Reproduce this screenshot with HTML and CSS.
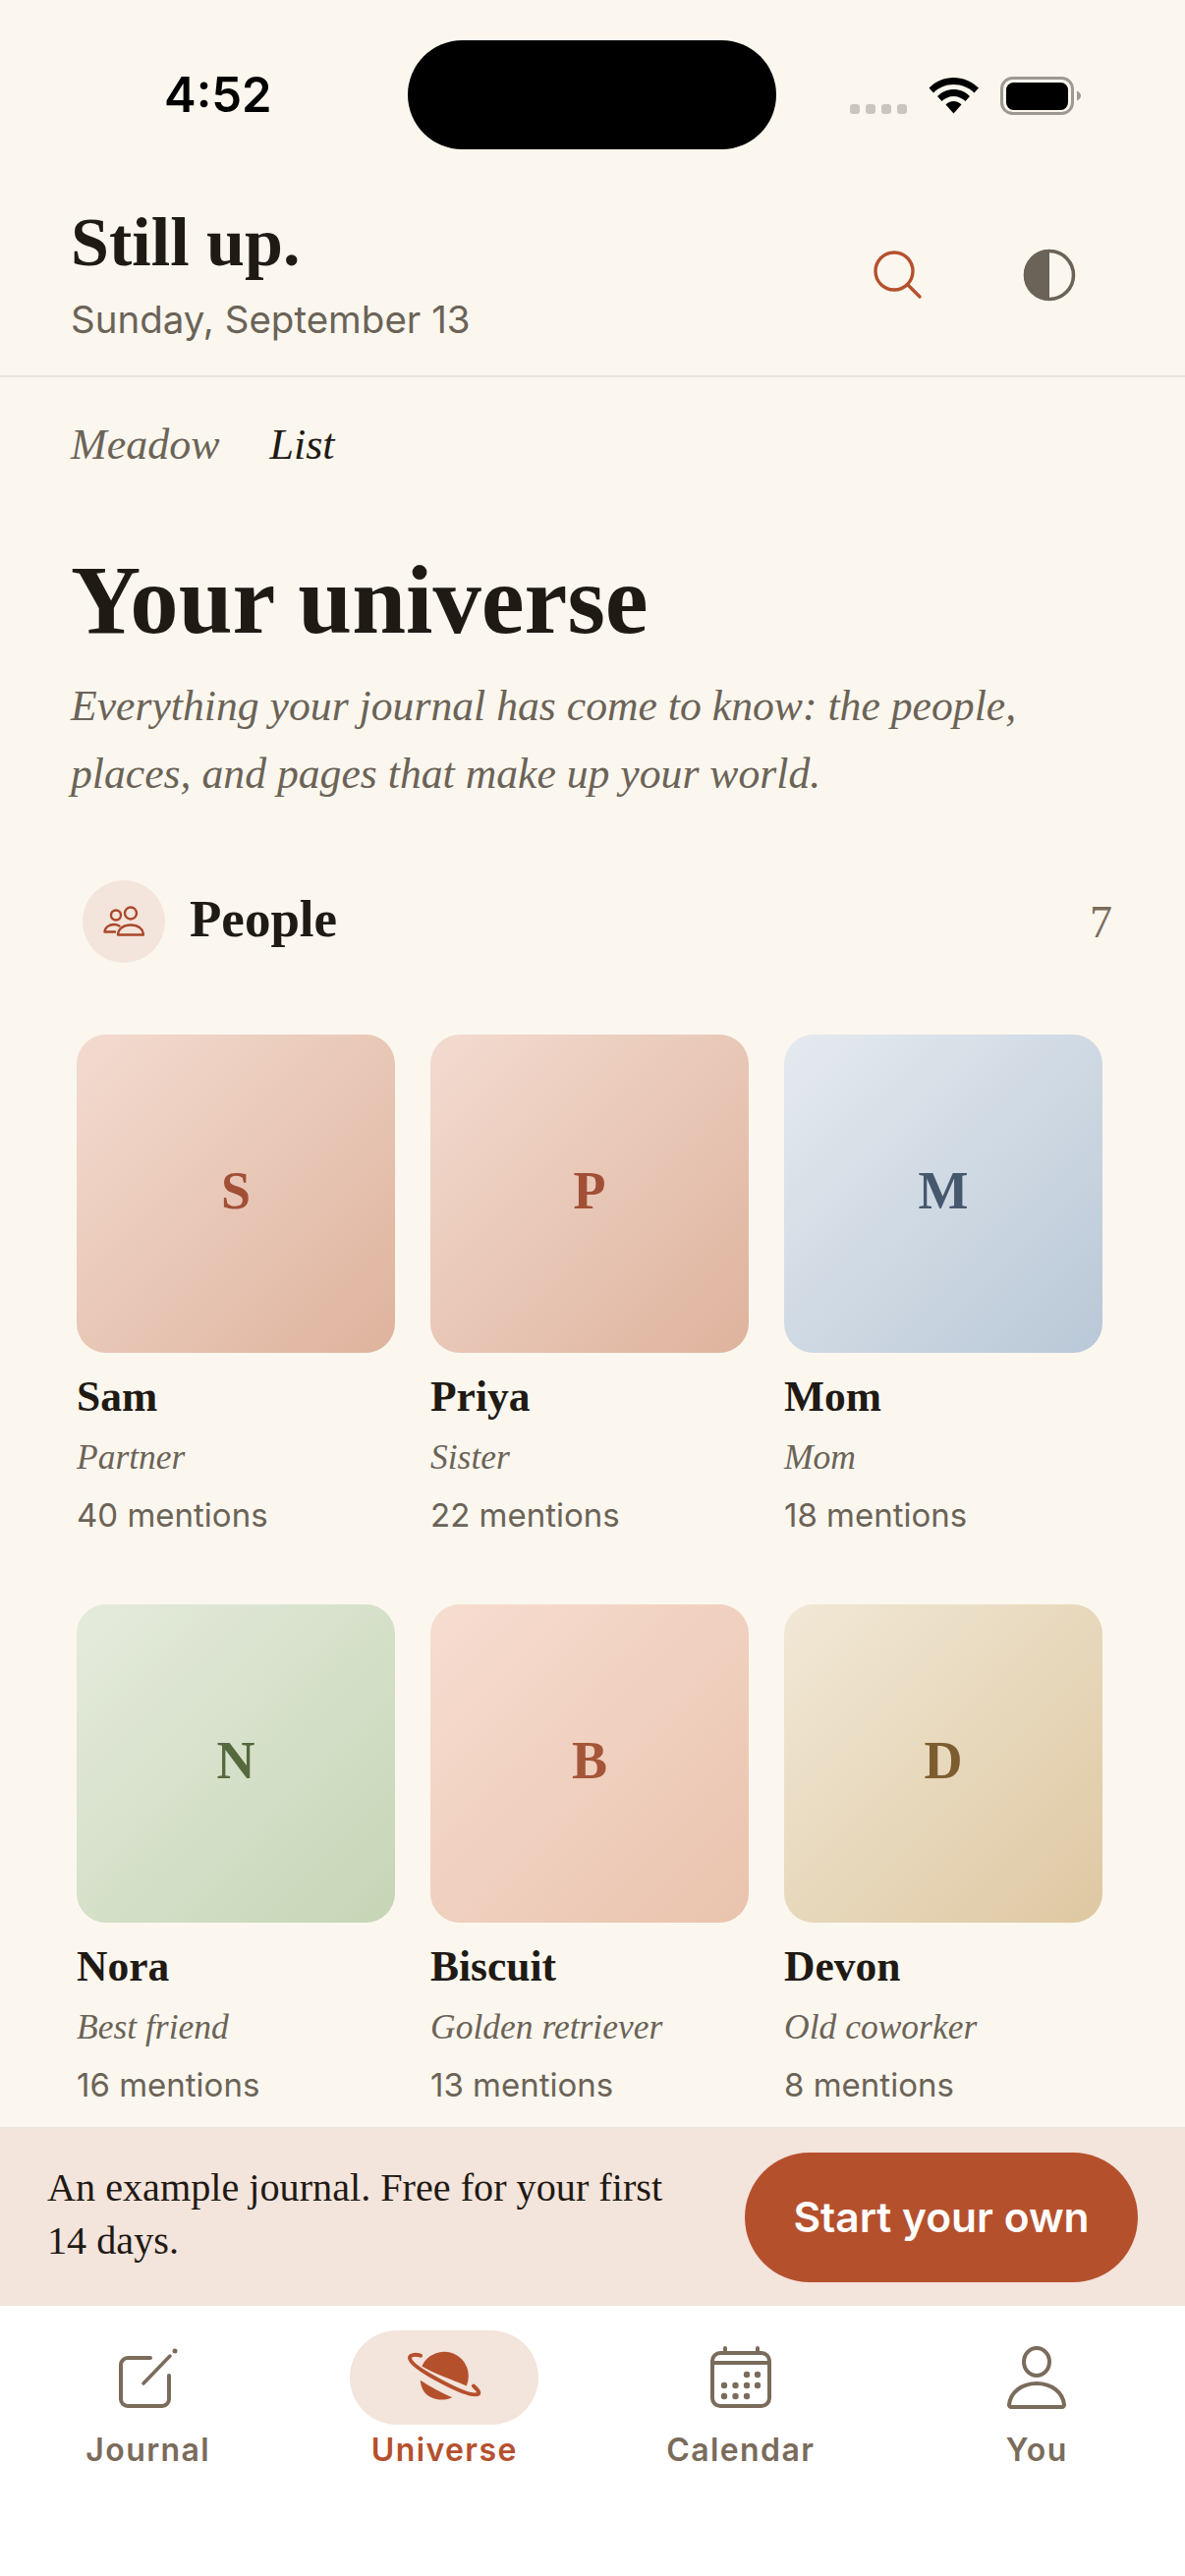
FILE: index.html
```html
<!DOCTYPE html>
<html lang="en">
<head>
    <meta charset="UTF-8">
    <meta name="viewport" content="width=device-width, initial-scale=1.0">
    <title>Your universe</title>
    <link rel="stylesheet" href="styles.css">
</head>
<body>
    <div class="phone">
        <div class="status-bar">
            <span class="time">4:52</span>
            <div class="island"></div>
            <div class="status-icons">
                <div class="signal"><i></i><i></i><i></i><i></i></div>
                <svg class="wifi" width="52" height="38" viewBox="0 0 52 38">
                    <path d="M0.500 11.500C7 5 16 1 25.500 1S44 5 51 11.500L46.500 16.500C41 11 33.500 8 25.500 8S10.500 11 5 16.500Z" fill="#000"/>
                    <path d="M9 20C13.500 15.500 19.500 13 25.500 13S38 15.500 42 20L37.500 25C34.500 22 30 20 25.500 20S16.500 22 13.500 25Z" fill="#000"/>
                    <path d="M17.500 28.500C19.500 26.500 22.500 25 25.500 25S31.500 26.500 33.500 28.500L25.500 37.500Z" fill="#000"/>
                </svg>
                <svg class="battery" width="82" height="40" viewBox="0 0 82 40">
                    <rect x="1.500" y="1.500" width="72" height="36" rx="11" fill="none" stroke="#9d9991" stroke-width="3"/>
                    <rect x="6" y="6" width="63" height="28" rx="7.500" fill="#000"/>
                    <path d="M78 14.500C80.500 15.500 82 17.500 82 19.500S80.500 23.500 78 24.500Z" fill="#9d9991"/>
                </svg>
            </div>
        </div>

        <header class="top">
            <div>
                <h1 class="greeting">Still up.</h1>
                <p class="date">Sunday, September 13</p>
            </div>
            <div class="top-actions">
                <svg width="50" height="50" viewBox="0 0 50 50" fill="none" stroke="#b5502d" stroke-width="3.400" stroke-linecap="round">
                    <circle cx="21" cy="21" r="19"/>
                    <path d="M35 35L47 47"/>
                </svg>
                <svg width="54" height="54" viewBox="0 0 54 54">
                    <circle cx="27" cy="27" r="24.500" fill="none" stroke="#6b6357" stroke-width="3.600"/>
                    <path d="M27 1A26 26 0 0 0 27 53Z" fill="#6b6357"/>
                </svg>
            </div>
        </header>

        <nav class="view-tabs">
            <span class="view-tab">Meadow</span>
            <span class="view-tab active">List</span>
        </nav>

        <main class="content">
            <h2 class="title">Your universe</h2>
            <p class="intro">Everything your journal has come to know: the people, places, and pages that make up your world.</p>

            <div class="section-head">
                <div class="section-label">
                    <div class="section-icon">
                        <svg width="42" height="32" viewBox="0 0 42 32" fill="none" stroke="#a9472a" stroke-width="2.400" stroke-linecap="round" stroke-linejoin="round">
                            <circle cx="13" cy="9.500" r="5"/>
                            <circle cx="28" cy="7.500" r="6"/>
                            <path d="M1.500 26.500C2 21.500 6.500 19 11 19C13 19 15 19.500 16.500 20.500M1.500 26.500H12"/>
                            <path d="M15 29.500C15.500 23 21 19.500 28 19.500S40.500 23 41 29.500Z"/>
                        </svg>
                    </div>
                    <h3 class="section-name">People</h3>
                </div>
                <span class="section-count">7</span>
            </div>

            <div class="people-grid">
                <div class="person">
                    <div class="avatar rose">S</div>
                    <div class="person-name">Sam</div>
                    <div class="person-role">Partner</div>
                    <div class="person-count">40 mentions</div>
                </div>
                <div class="person">
                    <div class="avatar rose">P</div>
                    <div class="person-name">Priya</div>
                    <div class="person-role">Sister</div>
                    <div class="person-count">22 mentions</div>
                </div>
                <div class="person">
                    <div class="avatar blue">M</div>
                    <div class="person-name">Mom</div>
                    <div class="person-role">Mom</div>
                    <div class="person-count">18 mentions</div>
                </div>
                <div class="person">
                    <div class="avatar green">N</div>
                    <div class="person-name">Nora</div>
                    <div class="person-role">Best friend</div>
                    <div class="person-count">16 mentions</div>
                </div>
                <div class="person">
                    <div class="avatar peach">B</div>
                    <div class="person-name">Biscuit</div>
                    <div class="person-role">Golden retriever</div>
                    <div class="person-count">13 mentions</div>
                </div>
                <div class="person">
                    <div class="avatar sand">D</div>
                    <div class="person-name">Devon</div>
                    <div class="person-role">Old coworker</div>
                    <div class="person-count">8 mentions</div>
                </div>
            </div>
        </main>

        <div class="banner">
            <p class="banner-text">An example journal. Free for your first 14 days.</p>
            <button class="banner-btn">Start your own</button>
        </div>

        <nav class="tabbar">
            <div class="tab">
                <div class="tab-icon">
                    <svg width="62" height="62" viewBox="0 0 62 62" fill="none" stroke="#7a6b5b" stroke-width="4" stroke-linecap="round" stroke-linejoin="round">
                        <path d="M33 11H10A7 7 0 0 0 3 18V53A7 7 0 0 0 10 60H45A7 7 0 0 0 52 53V29"/>
                        <path d="M26 37L53 9" stroke-width="3.500"/>
                        <circle cx="58" cy="4" r="1.500" stroke-width="2" fill="#7a6b5b"/>
                    </svg>
                </div>
                <span class="tab-label">Journal</span>
            </div>
            <div class="tab active">
                <div class="tab-icon">
                    <svg width="76" height="56" viewBox="0 0 76 56" fill="none">
                        <path d="M15.300 16.500A24.700 24.700 0 0 1 60.700 36.500C46 30 28 24 15.300 16.500Z" fill="#b5502d"/>
                        <path d="M13.700 30.700C22 36 36 44 46.300 48.300C36 53 24 50 18 43C15.500 39.500 14 35 13.700 30.700Z" fill="#b5502d"/>
                        <path d="M14 5.700C8 4 3 5 3 8C3 13 16 22 35 32C52 41 68 48 73 44.500C74.500 42 71 40 68 36.500" stroke="#b5502d" stroke-width="4" stroke-linecap="round"/>
                    </svg>
                </div>
                <span class="tab-label">Universe</span>
            </div>
            <div class="tab">
                <div class="tab-icon">
                    <svg width="64" height="64" viewBox="0 0 64 64" fill="none" stroke="#7a6b5b" stroke-width="4" stroke-linecap="round">
                        <rect x="3" y="7" width="58" height="54" rx="8"/>
                        <path d="M3 17H61M16 2V6M49 2V6"/>
                        <g fill="#7a6b5b" stroke="none">
                            <circle cx="38" cy="29" r="3.200"/><circle cx="49" cy="29" r="3.200"/>
                            <circle cx="15" cy="40" r="3.200"/><circle cx="26.500" cy="40" r="3.200"/><circle cx="38" cy="40" r="3.200"/><circle cx="49" cy="40" r="3.200"/>
                            <circle cx="15" cy="51" r="3.200"/><circle cx="26.500" cy="51" r="3.200"/><circle cx="38" cy="51" r="3.200"/>
                        </g>
                    </svg>
                </div>
                <span class="tab-label">Calendar</span>
            </div>
            <div class="tab">
                <div class="tab-icon">
                    <svg width="60" height="64" viewBox="0 0 60 64" fill="none" stroke="#7a6b5b" stroke-width="4" stroke-linejoin="round">
                        <ellipse cx="30" cy="16" rx="13" ry="14"/>
                        <path d="M2 60C3 47 15 38 30 38S57 47 58 60C58 61 57 62 56 62H4C3 62 2 61 2 60Z"/>
                    </svg>
                </div>
                <span class="tab-label">You</span>
            </div>
        </nav>
    </div>
</body>
</html>
```

FILE: styles.css
```css
* {
    box-sizing: border-box;
}
html, body {
    margin: 0;
    padding: 0;
}
body {
    font-family: Inter, "Liberation Sans", sans-serif;
    background-color: #fbf7ef;
    color: #1f1a14;
}
h1, h2, h3, p {
    margin: 0;
}
.phone {
    width: 1206px;
    height: 2622px;
    display: flex;
    flex-direction: column;
    overflow: hidden;
}

/* status bar */
.status-bar {
    height: 180px;
    padding: 41px 48px 0 167px;
    display: flex;
    align-items: flex-start;
    flex-shrink: 0;
}
.time {
    font-size: 49px;
    font-weight: 600;
    line-height: 58px;
    margin-top: 27px;
    width: 248px;
    color: #000;
}
.island {
    width: 375px;
    height: 111px;
    border-radius: 56px;
    background-color: #000;
}
.status-icons {
    display: flex;
    align-items: flex-start;
    margin-left: 75px;
    margin-top: 37px;
}
.signal {
    display: flex;
    gap: 6px;
    margin-top: 28px;
    margin-right: 22px;
}
.signal i {
    width: 10px;
    height: 10px;
    border-radius: 3px;
    background-color: #cac6bd;
}
.wifi {
    margin-right: 21px;
}

/* header */
.top {
    height: 204px;
    padding: 25px 72px 0;
    border-bottom: 2px solid #e8e3d9;
    display: flex;
    justify-content: space-between;
    flex-shrink: 0;
}
.greeting {
    font-family: "Liberation Serif", serif;
    font-size: 70px;
    font-weight: 700;
    line-height: 84px;
}
.date {
    font-size: 38.5px;
    line-height: 46px;
    margin-top: 13px;
    color: #6b6357;
}
.top-actions {
    display: flex;
    align-items: center;
    gap: 102px;
    height: 150px;
    margin-right: 39px;
}
.view-tabs {
    display: flex;
    gap: 51px;
    padding: 44px 72px 0;
    flex-shrink: 0;
}
.view-tab {
    font-family: "Liberation Serif", serif;
    font-style: italic;
    font-size: 44px;
    line-height: 50px;
    color: #6b6357;
}
.view-tab.active {
    color: #1f1a14;
}

/* main */
.content {
    flex: 1;
    min-height: 0;
    overflow: hidden;
    padding: 77px 72px 0;
}
.title {
    font-family: "Liberation Serif", serif;
    font-size: 98.7px;
    font-weight: 700;
    line-height: 112px;
}
.intro {
    font-family: "Liberation Serif", serif;
    font-style: italic;
    font-size: 43.7px;
    line-height: 69px;
    margin-top: 17px;
    color: #6b6357;
}
.section-head {
    display: flex;
    justify-content: space-between;
    align-items: center;
    margin-top: 74px;
    padding-left: 12px;
}
.section-label {
    display: flex;
    align-items: center;
    gap: 25px;
}
.section-icon {
    width: 84px;
    height: 84px;
    border-radius: 50%;
    background-color: #f3e4dc;
    display: flex;
    align-items: center;
    justify-content: center;
}
.section-name {
    font-family: "Liberation Serif", serif;
    font-size: 53px;
    font-weight: 700;
    line-height: 64px;
    margin-bottom: 6px;
}
.section-count {
    font-family: "Liberation Serif", serif;
    font-size: 46px;
    margin-right: 2px;
    color: #7a6b5b;
}
.people-grid {
    display: grid;
    grid-template-columns: repeat(3, 324px);
    column-gap: 36px;
    row-gap: 71px;
    margin-top: 73px;
    margin-left: 6px;
}
.avatar {
    height: 324px;
    padding-bottom: 6px;
    border-radius: 30px;
    display: flex;
    align-items: center;
    justify-content: center;
    font-family: "Liberation Serif", serif;
    font-size: 54px;
    font-weight: 700;
}
.avatar.rose {
    background: linear-gradient(135deg, #f3dbd0, #deb39d);
    color: #a14f35;
}
.avatar.blue {
    background: linear-gradient(135deg, #e5eaef, #b9c8d7);
    color: #46586e;
}
.avatar.green {
    background: linear-gradient(135deg, #e5ebdc, #c6d5b6);
    color: #55693f;
}
.avatar.peach {
    background: linear-gradient(135deg, #f7ddd1, #e9c3ad);
    color: #a5553a;
}
.avatar.sand {
    background: linear-gradient(135deg, #f1e8d6, #dec8a2);
    color: #7d5d30;
}
.person-name {
    font-family: "Liberation Serif", serif;
    font-size: 43.5px;
    font-weight: 700;
    line-height: 52px;
    margin-top: 18px;
}
.person-role {
    font-family: "Liberation Serif", serif;
    font-style: italic;
    font-size: 35.5px;
    line-height: 44px;
    margin-top: 14px;
    color: #6b6357;
}
.person-count {
    font-size: 33px;
    line-height: 40px;
    margin-top: 17px;
    color: #6b6357;
}

/* banner */
.banner {
    height: 182px;
    padding: 0 48px;
    background-color: #f3e4dc;
    border-top: 2px solid #ece5d9;
    display: flex;
    align-items: center;
    justify-content: space-between;
    flex-shrink: 0;
}
.banner-text {
    width: 660px;
    font-family: "Liberation Serif", serif;
    font-size: 40.2px;
    line-height: 54px;
    margin-top: -6px;
    color: #1f1a14;
}
.banner-btn {
    width: 400px;
    height: 132px;
    border: none;
    border-radius: 66px;
    background-color: #b5502d;
    color: #fff;
    font-family: Inter, sans-serif;
    font-size: 42.5px;
    font-weight: 600;
    padding-bottom: 2px;
}

/* bottom tabs */
.tabbar {
    height: 275px;
    background-color: #fff;
    display: grid;
    grid-template-columns: repeat(4, 1fr);
    padding-top: 25px;
    flex-shrink: 0;
}
.tab {
    display: flex;
    flex-direction: column;
    align-items: center;
}
.tab-icon {
    width: 192px;
    height: 96px;
    border-radius: 48px;
    display: flex;
    align-items: center;
    justify-content: center;
}
.tab.active .tab-icon {
    background-color: #f3e4dc;
}
.tab-label {
    font-size: 32px;
    font-weight: 600;
    letter-spacing: 1.4px;
    line-height: 40px;
    margin-top: 6px;
    color: #7a6b5b;
}
.tab.active .tab-label {
    color: #b5502d;
}
```
